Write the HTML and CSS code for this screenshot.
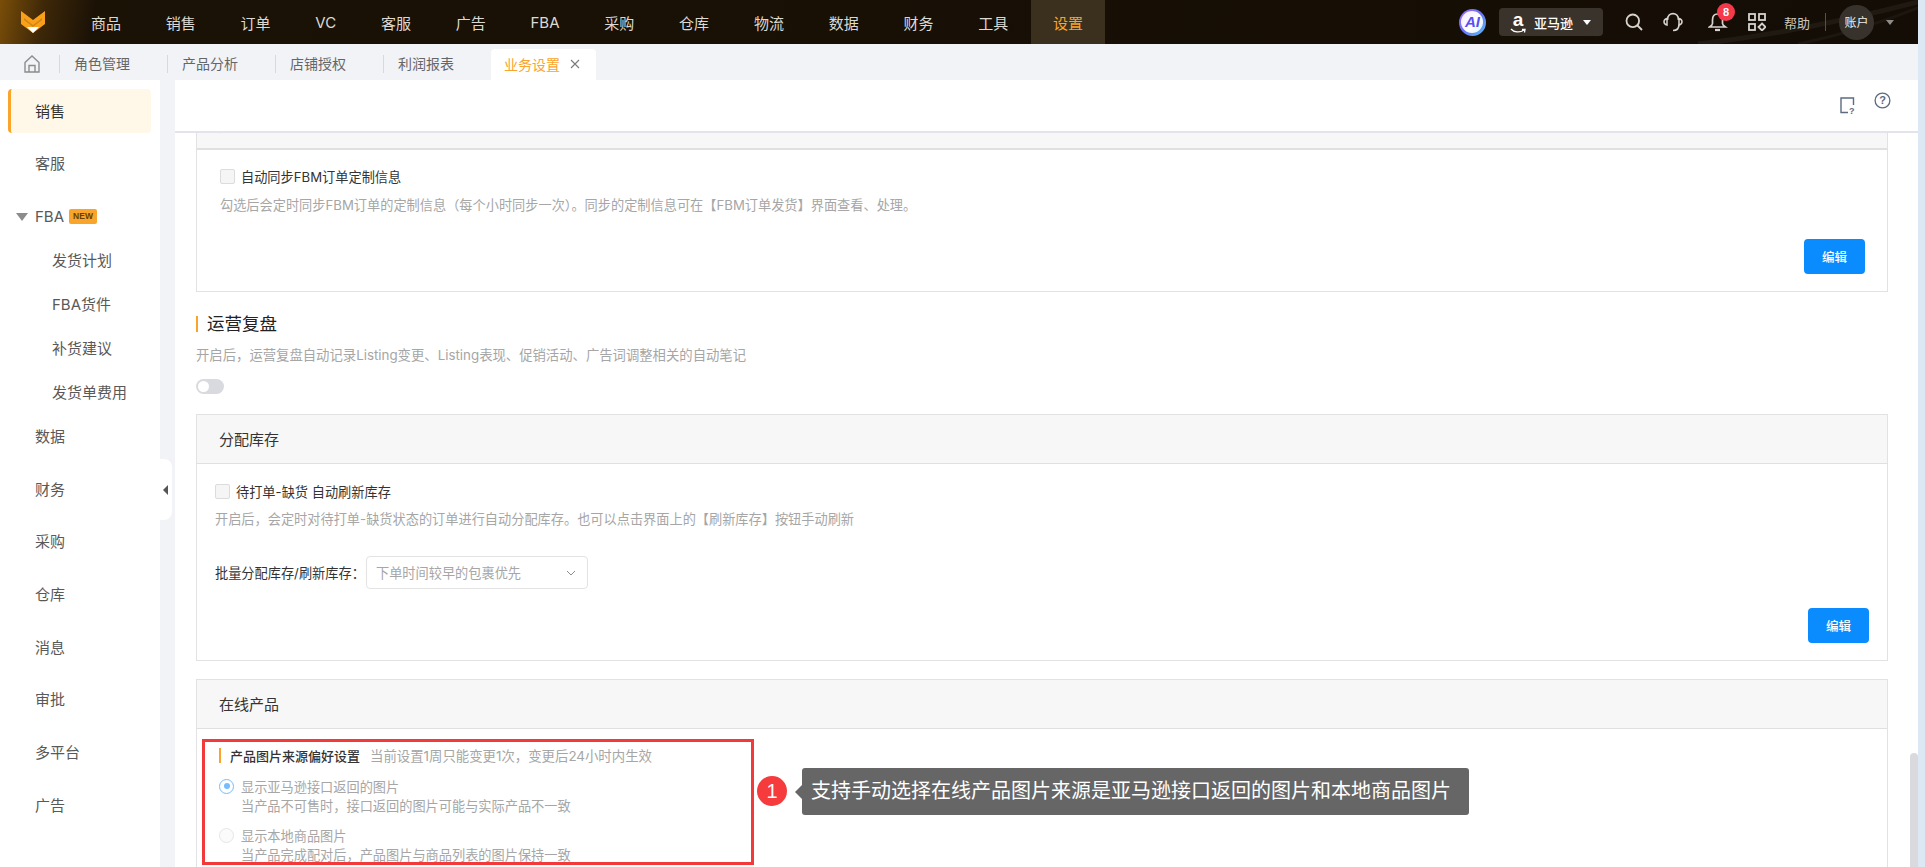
FILE: index.html
```html
<!DOCTYPE html>
<html lang="zh-CN">
<head>
<meta charset="utf-8">
<title>业务设置</title>
<link rel="stylesheet" href="styles.css">
</head>
<body>
<div class="app">
  <header class="topbar">
    <svg class="streaks" viewBox="0 0 240 44" width="240" height="44"><path d="M20 44 C90 36 170 20 240 2" fill="none" stroke="#fff" stroke-opacity=".05" stroke-width="5"/><path d="M120 44 C160 36 205 22 240 8" fill="none" stroke="#fff" stroke-opacity=".04" stroke-width="3"/></svg>
    <svg class="logo" viewBox="0 0 24 22" width="24" height="22">
      <path d="M0 0 L12 9 L24 0 V13 L12 22 L0 13 Z" fill="#f9a01b"/>
      <path d="M3 7 L12 14 L21 7 L21 9 L12 16 L3 9 Z" fill="#b46f0c" opacity=".55"/>
      <path d="M6 16 H18 L12 22 Z" fill="#fff"/>
    </svg>
    <nav class="nav">
      <a class="nav-item">商品</a><a class="nav-item">销售</a><a class="nav-item">订单</a><a class="nav-item">VC</a><a class="nav-item">客服</a><a class="nav-item">广告</a><a class="nav-item">FBA</a><a class="nav-item">采购</a><a class="nav-item">仓库</a><a class="nav-item">物流</a><a class="nav-item">数据</a><a class="nav-item">财务</a><a class="nav-item">工具</a><a class="nav-item nav-active">设置</a>
    </nav>
    <div class="top-right">
      <span class="ai-badge">AI</span>
      <div class="platform">
        <span class="amz"><span class="amz-a">a</span><svg class="amz-smile" viewBox="0 0 16 6" width="16" height="6"><path d="M1 1 C4 4.5 10 5 14 2 M12 1.5 L15 1.5 L14.5 4.5" stroke="#fff" stroke-width="1.3" fill="none"/></svg></span>
        <span class="platform-name">亚马逊</span>
        <span class="caret caret-white"></span>
      </div>
      <svg class="ic ic-search" viewBox="0 0 18 18" width="18" height="18"><circle cx="7.8" cy="7.8" r="6.3" fill="none" stroke="#d6d3cf" stroke-width="1.8"/><path d="M12.5 12.5 L17 17" stroke="#d6d3cf" stroke-width="1.8"/></svg>
      <svg class="ic ic-head" viewBox="0 0 20 20" width="20" height="20"><path d="M4.5 8 C4.5 -0.5 15.5 -0.5 15.5 8" fill="none" stroke="#d6d3cf" stroke-width="1.8"/><path d="M4 6.5 C0 7.5 0 12 4 13 Z" fill="none" stroke="#d6d3cf" stroke-width="1.5"/><path d="M16 6.5 C20 7.5 20 12 16 13 Z" fill="none" stroke="#d6d3cf" stroke-width="1.5"/><path d="M16 12.5 C16 16.5 14 18.5 10 18.5" fill="none" stroke="#d6d3cf" stroke-width="1.7"/></svg>
      <div class="bell">
        <svg viewBox="0 0 20 20" width="20" height="20"><path d="M9.5 2 C5.5 2 4.5 5 4.5 8 V11.5 C4.5 13 3 14 1.5 15 H17.5 C16 14 14.5 13 14.5 11.5 V8 C14.5 5 13.5 2 9.5 2 Z" fill="none" stroke="#d6d3cf" stroke-width="1.7"/><path d="M7 18 H12" stroke="#d6d3cf" stroke-width="2.2"/></svg>
        <span class="bell-badge">8</span>
      </div>
      <svg class="ic ic-apps" viewBox="0 0 18 18" width="18" height="18"><g fill="none" stroke="#d6d3cf" stroke-width="1.8"><rect x="1" y="1" width="6" height="6"/><rect x="11" y="1" width="6" height="6"/><rect x="1" y="11" width="6" height="6"/><path d="M14 10.5 L17.5 14 L14 17.5 L10.5 14 Z"/></g></svg>
      <span class="help">帮助</span>
      <span class="vsep"></span>
      <span class="avatar">账户</span>
      <span class="caret caret-gray"></span>
    </div>
  </header>

  <div class="tabs">
    <svg class="home" viewBox="0 0 16 18" width="16" height="18"><path d="M1 7.5 L8 1 L15 7.5 V17 H1 Z M5 17 V10.5 H11 V17" fill="none" stroke="#8c8c8c" stroke-width="1.4"/></svg>
    <span class="tab tab-first">角色管理</span>
    <span class="tab">产品分析</span>
    <span class="tab">店铺授权</span>
    <span class="tab">利润报表</span>
    <span class="tab-active">业务设置<svg class="tab-x" viewBox="0 0 10 10" width="10" height="10"><path d="M1 1 L9 9 M9 1 L1 9" stroke="#7a7a7a" stroke-width="1.1"/></svg></span>
  </div>

  <div class="main">
    <aside class="sidebar">
      <a class="side side-active">销售</a>
      <a class="side">客服</a>
      <a class="side side-fba"><span class="tri"></span>FBA<span class="new">NEW</span></a>
      <a class="sub">发货计划</a>
      <a class="sub">FBA货件</a>
      <a class="sub">补货建议</a>
      <a class="sub sub-last">发货单费用</a>
      <a class="side">数据</a>
      <a class="side">财务</a>
      <a class="side">采购</a>
      <a class="side">仓库</a>
      <a class="side">消息</a>
      <a class="side">审批</a>
      <a class="side">多平台</a>
      <a class="side">广告</a>
    </aside>
    <div class="gutter"><span class="collapse"><span class="collapse-arrow"></span></span></div>
    <section class="content">
      <div class="toolbar">
        <svg class="tool-doc" viewBox="0 0 15 17" width="15" height="17"><path d="M8 15.5 H1 V1 H13.5 V8" fill="none" stroke="#5b6b80" stroke-width="1.4"/><text x="9" y="16.5" class="tool-q">?</text></svg>
        <svg class="tool-help" viewBox="0 0 17 17" width="17" height="17"><circle cx="8.5" cy="8.5" r="7.4" fill="none" stroke="#5b6b80" stroke-width="1.3"/><text x="8.5" y="12.4" text-anchor="middle" class="tool-q2">?</text></svg>
      </div>
      <div class="scroll">
        <div class="inner">
          <div class="card card-1">
            <div class="card-head">定制化订单</div>
            <div class="card-body body-1">
              <label class="check"><span class="box"></span>自动同步FBM订单定制信息</label>
              <p class="desc desc-1">勾选后会定时同步FBM订单的定制信息（每个小时同步一次）。同步的定制信息可在【FBM订单发货】界面查看、处理。</p>
              <div class="actions act-1"><button class="btn">编辑</button></div>
            </div>
          </div>

          <h2 class="sec-title">运营复盘</h2>
          <p class="desc sec-desc">开启后，运营复盘自动记录Listing变更、Listing表现、促销活动、广告词调整相关的自动笔记</p>
          <span class="toggle"><span class="knob"></span></span>

          <div class="card card-2">
            <div class="card-head">分配库存</div>
            <div class="card-body body-2">
              <label class="check"><span class="box"></span>待打单-缺货 自动刷新库存</label>
              <p class="desc desc-1">开启后，会定时对待打单-缺货状态的订单进行自动分配库存。也可以点击界面上的【刷新库存】按钮手动刷新</p>
              <div class="select-row">
                <span class="select-label">批量分配库存/刷新库存：</span>
                <div class="select">下单时间较早的包裹优先<svg class="chev" viewBox="0 0 10 6" width="10" height="6"><path d="M1 1 L5 5 L9 1" fill="none" stroke="#8c8c8c" stroke-width="1"/></svg></div>
              </div>
              <div class="actions act-2"><button class="btn">编辑</button></div>
            </div>
          </div>

          <div class="card card-3">
            <div class="card-head">在线产品</div>
            <div class="card-body body-3">
              <div class="pref-head"><span class="pref-title">产品图片来源偏好设置</span><span class="pref-hint">当前设置1周只能变更1次，变更后24小时内生效</span></div>
              <div class="radio-row r1"><span class="radio radio-on"></span>显示亚马逊接口返回的图片</div>
              <div class="radio-sub s1">当产品不可售时，接口返回的图片可能与实际产品不一致</div>
              <div class="radio-row r2"><span class="radio"></span>显示本地商品图片</div>
              <div class="radio-sub s2">当产品完成配对后，产品图片与商品列表的图片保持一致</div>
              <div class="redbox"></div>
              <span class="num">1</span>
              <div class="tip">支持手动选择在线产品图片来源是亚马逊接口返回的图片和本地商品图片</div>
            </div>
          </div>
        </div>
        <span class="thumb"></span>
      </div>
    </section>
  </div>
</div>
</body>
</html>
```
FILE: styles.css
```css
* { box-sizing: border-box; }
html, body { margin: 0; height: 100%; overflow: hidden; }
body {
  background: #dde8f5;
  font-family: Inter, "Noto Sans CJK SC", sans-serif;
  color: #333;
}
p, h2 { margin: 0; }
.app { width: 1918px; height: 867px; display: flex; flex-direction: column; }

/* top bar */
.topbar {
  height: 44px; flex: none; display: flex; align-items: center;
  background: linear-gradient(100deg, #7a4e08 0, #3d2708 45px, #1b1206 95px, #140d05 100%);
  position: relative;
}
.streaks { position: absolute; right: 0; top: 0; }
.logo { margin-left: 21px; flex: none; }
.nav { display: flex; height: 44px; margin-left: 23.5px; }
.nav-item {
  display: flex; align-items: center; padding: 0 22.4px;
  font-size: 15px; color: #dcd9d5;
}
.nav-active { background: #3b2f1e; color: #f9a42b; }
.top-right { margin-left: auto; display: flex; align-items: center; height: 44px; padding-right: 24px; position: relative; }
.ai-badge {
  width: 27px; height: 27px; border-radius: 50%; padding: 2.5px;
  background: linear-gradient(135deg, #9b6cf7, #6a72f5 50%, #55c4f5);
  color: #5a4ff0; font: italic bold 15px/22px "Liberation Sans", sans-serif; text-align: center;
  display: block; position: relative; isolation: isolate;
}
.ai-badge::before {
  content: ""; position: absolute; inset: 2.5px; border-radius: 50%; z-index: -1;
  background: linear-gradient(135deg, #f3eaff, #fff 60%, #d9f2ff);
}
.platform {
  width: 104px; height: 28px; margin-left: 13px; background: #3a332b; border-radius: 4px;
  display: flex; align-items: center; padding-left: 11px; color: #fff;
}
.amz { width: 16px; height: 24px; position: relative; display: block; }
.amz-a { display: block; font: bold 19px/20px "Liberation Sans", sans-serif; text-align: center; }
.amz-smile { position: absolute; left: 0; bottom: 0; }
.platform-name { font-size: 13px; font-weight: 500; margin-left: 8px; width: 49px; }
.caret { width: 0; height: 0; border-left: 4.5px solid transparent; border-right: 4.5px solid transparent; border-top: 5px solid #fff; }
.caret-gray { border-top-color: #8f8c88; margin-left: 12px; }
.ic-search { margin-left: 22px; }
.ic-head { margin-left: 20px; }
.bell { position: relative; width: 20px; height: 20px; margin-left: 25px; }
.bell svg { display: block; }
.bell-badge {
  position: absolute; left: 9px; top: -9px; width: 18px; height: 18px; border-radius: 50%;
  background: #f5394b; color: #fff; font: bold 11px/18px "Liberation Sans", sans-serif; text-align: center;
}
.ic-apps { margin-left: 20px; }
.help { font-size: 13px; color: #c9c6c2; margin-left: 18px; }
.vsep { width: 1px; height: 18px; background: #55504a; margin-left: 15px; }
.avatar {
  width: 35px; height: 35px; border-radius: 50%; margin-left: 13px; background: #38322c;
  color: #eee; font-size: 12px; line-height: 35px; text-align: center;
}

/* tabs */
.tabs { height: 36px; flex: none; display: flex; align-items: center; background: #f1f3f7; padding: 3px 0 0 24px; }
.home { flex: none; }
.tab { font-size: 14px; color: #666; width: 108px; padding-left: 14px; line-height: 18px; border-left: 1px solid #d9d9d9; }
.tab-first { margin-left: 19px; }
.tab-active {
  align-self: flex-end; height: 31px; width: 105px; background: #fff;
  border-radius: 4px 4px 0 0; color: #f9a42b; font-size: 14px;
  display: flex; align-items: center; padding: 0 0 1px 13px;
}
.tab-x { margin-left: 10px; }

/* layout */
.main { flex: 1; display: flex; min-height: 0; }
.sidebar { width: 160px; flex: none; background: #fff; padding-top: 9px; overflow: hidden; }
.side {
  display: flex; align-items: center; height: 44px; margin-bottom: 8.7px; padding: 0 0 2px 35px;
  font-size: 15px; color: #595959;
}
.side-active {
  margin-left: 8px; width: 143px; padding-left: 24px; background: #fff7e8; color: #333;
  border-left: 3px solid #f9a42b; border-radius: 4px;
}
.side-fba { margin-bottom: 0; padding: 1px 0 0 16px; }
.tri { width: 0; height: 0; border-left: 6px solid transparent; border-right: 6px solid transparent; border-top: 8px solid #8c8c8c; margin-right: 7px; }
.new {
  margin-left: 5px; width: 28px; height: 15px; border-radius: 2px; background: #f9a42b; color: #6b3d00;
  font: bold 8.5px/15px "Liberation Sans", sans-serif; text-align: center;
}
.sub { display: flex; align-items: center; height: 44px; padding: 0 0 2px 52px; font-size: 15px; color: #595959; }
.gutter { width: 15px; flex: none; background: #f2f3f7; position: relative; }
.collapse {
  position: absolute; left: 0; top: 379px; width: 12px; height: 61px; background: #fff;
  border-radius: 0 8px 8px 0; display: flex; align-items: center; padding-left: 3px;
}
.collapse-arrow { width: 0; height: 0; border-top: 5px solid transparent; border-bottom: 5px solid transparent; border-right: 5px solid #555; }

/* content */
.content { flex: 1; min-width: 0; background: #fff; display: flex; flex-direction: column; }
.toolbar { height: 53px; flex: none; border-bottom: 2px solid #e3e4ea; display: flex; padding: 12px 27px 0 0; justify-content: flex-end; }
.tool-doc { margin-top: 5px; }
.tool-help { margin-left: 19px; }
.tool-q { font: bold 9px "Liberation Sans", sans-serif; fill: #5b6b80; }
.tool-q2 { font: bold 11px "Liberation Sans", sans-serif; fill: #5b6b80; }
.scroll { flex: 1; min-height: 0; overflow: hidden; position: relative; }
.inner { margin-top: -33px; padding: 0 30px 0 21px; }
.thumb { position: absolute; right: 0; top: 620px; width: 8px; height: 200px; background: #d9d9de; border-radius: 4px 4px 0 0; }

.card { border: 1px solid #e2e2e2; }
.card-head { height: 49px; background: #f7f7f7; border-bottom: 1px solid #e0e0e0; font-size: 15px; line-height: 49px; padding-left: 22px; color: #333; }
.card-1 .card-head { border-bottom-width: 2px; }
.check { display: flex; align-items: center; height: 18px; font-size: 13.2px; color: #333; }
.box { width: 15px; height: 15px; background: #f5f5f5; border: 1px solid #dcdcdc; border-radius: 2px; margin-right: 6px; }
.desc { font-size: 13.2px; line-height: 18px; color: #a6a6a6; white-space: nowrap; }
.desc-1 { margin-top: 10px; }
.body-1 { padding: 17px 22px 17px 23px; }
.body-1 .desc-1 { margin-top: 11px; }
.body-2 { padding: 18px 18px 16px 18px; }
.actions { display: flex; justify-content: flex-end; }
.act-1 { margin-top: 25px; }
.act-2 { margin-top: 19px; }
.btn {
  width: 61px; height: 35px; border: 0; border-radius: 4px; background: #0a8cff; color: #fff;
  font: 500 12.5px Inter, "Noto Sans CJK SC", sans-serif;
}
.sec-title {
  margin-top: 20px; height: 24px; line-height: 24px; font-size: 17.5px; font-weight: 400; color: #222;
  display: flex; align-items: center;
}
.sec-title::before { content: ""; width: 2px; height: 16px; background: #f9a42b; margin-right: 9px; }
.sec-desc { margin-top: 10px; font-size: 13.35px; }
.toggle { display: block; width: 28px; height: 15px; margin-top: 15px; border-radius: 8px; background: #d9dadf; padding: 2px; }
.knob { display: block; width: 11px; height: 11px; border-radius: 50%; background: #fff; }
.card-2 { margin-top: 20px; height: 247px; }
.select-row { display: flex; align-items: center; margin-top: 28px; height: 33px; }
.select-label { font-size: 13.2px; color: #333; width: 151px; white-space: nowrap; }
.select {
  width: 222px; height: 33px; border: 1px solid #e3e3e3; border-radius: 4px; padding: 0 11px 0 9px;
  display: flex; align-items: center; justify-content: space-between; font-size: 13.2px; color: #a6a6a6;
}
.card-3 { margin-top: 18px; }
.body-3 { position: relative; height: 150px; padding: 17px 0 0 22px; }
.pref-head { display: flex; align-items: center; height: 18px; font-size: 13px; }
.pref-head::before { content: ""; width: 2px; height: 15px; background: #f9a42b; margin-right: 9px; }
.pref-title { color: #333; font-weight: 500; }
.pref-hint { color: #a6a6a6; margin-left: 10px; font-size: 13.4px; }
.radio-row { display: flex; align-items: center; height: 18px; font-size: 13.2px; color: #a6a6a6; margin-top: 13px; }
.r2 { margin-top: 11px; }
.radio { width: 15px; height: 15px; border-radius: 50%; border: 1px solid #e6e6e6; background: #fbfbfb; margin-right: 7px; position: relative; }
.radio-on { border-color: #74bcff; background: #fff; }
.radio-on::after { content: ""; position: absolute; left: 3.5px; top: 3.5px; width: 6px; height: 6px; border-radius: 50%; background: #74bcff; }
.radio-sub { font-size: 13.2px; line-height: 18px; color: #a6a6a6; padding-left: 22px; margin-top: 2px; }
.redbox { position: absolute; left: 5px; top: 10px; width: 552px; height: 126px; border: 3px solid #f23a3a; }
.num {
  position: absolute; left: 560px; top: 47px; width: 30px; height: 30px; border-radius: 50%;
  background: #f53b3b; color: #fff; font: 20px/30px "Liberation Sans", sans-serif; text-align: center;
}
.tip {
  position: absolute; left: 605px; top: 39px; width: 667px; height: 47px; border-radius: 3px;
  background: #666; color: #fff; font-size: 20px; line-height: 47px; padding-left: 9px; white-space: nowrap;
}
.tip::before {
  content: ""; position: absolute; left: -7px; top: 17px; width: 0; height: 0;
  border-top: 7px solid transparent; border-bottom: 7px solid transparent; border-right: 7px solid #666;
}
```
